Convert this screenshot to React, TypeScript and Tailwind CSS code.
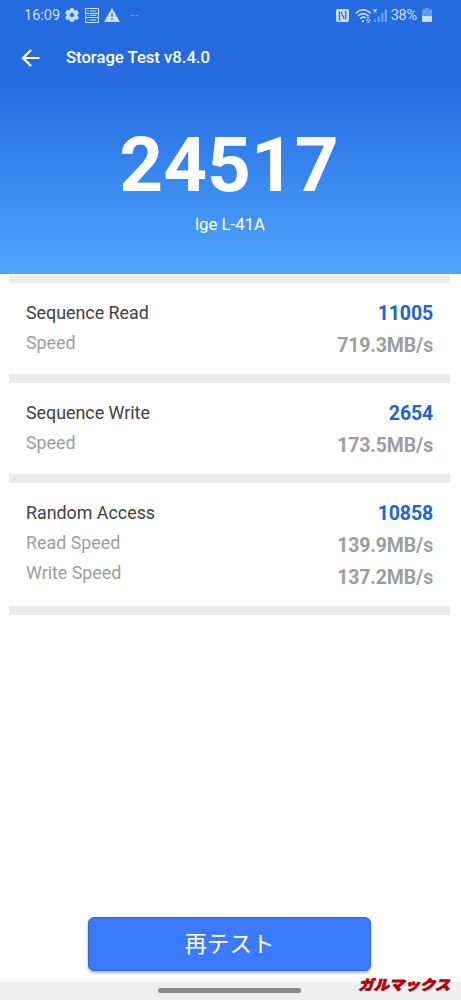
type Row = { label: string; value: string };

type Section = { title: string; score: string; rows: Row[] };

const sections: Section[] = [
  {
    title: "Sequence Read",
    score: "11005",
    rows: [{ label: "Speed", value: "719.3MB/s" }],
  },
  {
    title: "Sequence Write",
    score: "2654",
    rows: [{ label: "Speed", value: "173.5MB/s" }],
  },
  {
    title: "Random Access",
    score: "10858",
    rows: [
      { label: "Read Speed", value: "139.9MB/s" },
      { label: "Write Speed", value: "137.2MB/s" },
    ],
  },
];

const StatusBar = () => {
  return (
    <div className="flex h-[30px] items-center justify-between pl-6 pr-[29px] text-[#c9dffb]">
      <div className="flex items-center">
        <span className="w-[41px] pt-px text-[14.5px] leading-[30px]">16:09</span>
        <svg className="size-[14px]" viewBox="2 2 20 20" fill="currentColor">
          <path
            stroke="currentColor"
            d="M19.14 12.94c.04-.3.06-.61.06-.94s-.02-.64-.07-.94l2.03-1.58a.49.49 0 0 0 .12-.61l-1.92-3.32a.49.49 0 0 0-.59-.22l-2.39.96a7 7 0 0 0-1.62-.94l-.36-2.54a.48.48 0 0 0-.48-.41h-3.84a.48.48 0 0 0-.47.41l-.36 2.54c-.59.24-1.13.57-1.62.94l-2.39-.96a.49.49 0 0 0-.59.22L2.74 8.87a.48.48 0 0 0 .12.61l2.03 1.58c-.05.3-.09.63-.09.94s.02.64.07.94l-2.03 1.58a.49.49 0 0 0-.12.61l1.92 3.32c.12.22.37.29.59.22l2.39-.96c.5.38 1.03.7 1.62.94l.36 2.54c.05.24.24.41.48.41h3.84c.24 0 .44-.17.47-.41l.36-2.54c.59-.24 1.13-.56 1.62-.94l2.39.96c.22.08.47 0 .59-.22l1.92-3.32a.48.48 0 0 0-.12-.61zM12 15.6A3.6 3.6 0 1 1 12 8.4a3.6 3.6 0 0 1 0 7.2z"
          />
        </svg>
        <svg
          className="ml-[6px] h-[15px] w-[14px]"
          viewBox="0 0 14 15"
          fill="none"
          stroke="currentColor"
        >
          <path d="M.5.5h13v14H.5zM.5 5.5h13M.5 9.5h13M5 3h6.500M5 7.500h6.500M5 12h6.500M2.400 3h1.200M2.400 7.500h1.200M2.400 12h1.200" />
        </svg>
        <svg className="ml-[5px] h-[14px] w-4" viewBox="1 2 22 19" fill="currentColor">
          <path d="M1 21h22L12 2zm12-3h-2v-2h2zm0-4h-2V9h2z" />
        </svg>
        <span className="ml-[11px] flex gap-px opacity-60">
          <i className="h-px w-[1.5px] bg-current" />
          <i className="h-px w-[1.5px] bg-current" />
          <i className="h-px w-[1.5px] bg-current" />
        </span>
      </div>

      <div className="flex items-center">
        {/* NFC */}
        <svg className="h-[13px] w-[13px]" viewBox="0 0 13 13">
          <rect width="13" height="13" rx="2" fill="currentColor" />
          <path
            d="M3.4 2.600v7.800q0 .8.8.8M5 3l3.200 6.800M8.800 1.800q.9 0 .9.8v7.800"
            fill="none"
            stroke="#256be0"
            strokeWidth="1.300"
          />
        </svg>
        {/* Wi-Fi */}
        <svg
          className="ml-[6px] h-[15px] w-[17px]"
          viewBox="0 0 17 15"
          fill="none"
          stroke="currentColor"
          strokeWidth="1.600"
        >
          <path d="M.8 5.300Q8.200-1.800 15.800 5.300M3 8Q8.200 3.300 13.500 8M5.400 10.700Q8.200 8 10.600 10" />
          <circle cx="8" cy="13.200" r="1.100" fill="currentColor" stroke="none" />
          <path d="M12.200 9.500h2M11.200 12h1.500M13.800 12h1.500M12.500 14h2" strokeWidth="1.400" />
        </svg>
        {/* Mobile signal */}
        <svg className="ml-px h-[15px] w-[14px]" viewBox="0 0 14 15">
          <path d="M.6 1.500 3.600 4.500M3.600 1.500.6 4.500" stroke="currentColor" strokeWidth="1.400" />
          <path
            d="M1 11.500h2V14H1zM4.600 8.500h2.300V14H4.600zM8.200 5h2.300v9H8.200zM11.700 1.500H14V14h-2.300z"
            fill="currentColor"
            opacity=".45"
          />
        </svg>
        <span className="ml-[4px] pt-px text-[14.5px] leading-[30px] tracking-[-0.2px]">38%</span>
        <svg className="ml-[5px] h-[14px] w-[10px]" viewBox="0 0 10 14" fill="currentColor">
          <path d="M3 0h4v1.500h3V8H0V1.500h3z" opacity=".4" />
          <path d="M0 8h10v5q0 1-1 1H1q-1 0-1-1z" />
        </svg>
      </div>
    </div>
  );
};

const Watermark = () => {
  return (
    <svg className="absolute bottom-[7px] right-[6px] h-[18px] w-[98px]" viewBox="0 0 98 18">
      <text
        x="5"
        y="15"
        textLength="92"
        lengthAdjust="spacingAndGlyphs"
        transform="skewX(-14)"
        className="fill-[#ad0508] stroke-[#ad0508] font-['Noto_Sans_CJK_JP',sans-serif] text-[14px] font-black"
        strokeWidth=".8"
        strokeLinejoin="miter"
      >
        ガルマックス
      </text>
    </svg>
  );
};

const App = () => {
  return (
    <div className="relative flex h-[1000px] w-[461px] flex-col overflow-hidden bg-white font-[Roboto,'Noto_Sans_CJK_JP',sans-serif]">
      {/* Header */}
      <header className="h-[274px] shrink-0 bg-linear-to-b from-[#256be0] from-30% to-[#51a5fd] text-white">
        <StatusBar />
        <div className="flex h-[55px] items-center pl-[21px]">
          <svg
            className="h-[18px] w-[19px]"
            viewBox="0 0 19 18"
            fill="none"
            stroke="currentColor"
            strokeWidth="2.2"
          >
            <path d="M18.500 9H2M10 1 2 9l8 8" />
          </svg>
          <h1 className="ml-[26px] pt-px text-[16.65px] font-medium">Storage Test v8.4.0</h1>
        </div>
        <p className="mr-[3px] mt-[40px] text-center text-[76.5px] font-bold leading-[80px]">
          24517
        </p>
        <p className="mr-px mt-[7px] text-center text-[16.8px] leading-6">lge L-41A</p>
      </header>

      {/* Results */}
      <main className="mx-[9px] mr-[11px] mt-px border-t-8 border-[#ebebeb]">
        {sections.map((section) => (
          <section
            key={section.title}
            className="flex justify-between border-b-9 border-[#ebebeb] px-[17px] pb-[12px] pt-[15px]"
          >
            <div className="text-[17.85px] leading-[30px] text-[#9e9e9e]">
              <h2 className="text-[#424242]">{section.title}</h2>
              {section.rows.map((row) => (
                <p key={row.label}>{row.label}</p>
              ))}
            </div>
            <div className="text-right text-[19.5px] font-bold leading-[32px] tracking-[-0.15px] text-[#9e9e9e]">
              <p className="text-[#2064d6]">{section.score}</p>
              {section.rows.map((row) => (
                <p key={row.label}>{row.value}</p>
              ))}
            </div>
          </section>
        ))}
      </main>

      {/* Footer */}
      <div className="mt-auto mb-[11px] pl-[88px]">
        <button className="block h-[54px] w-[283px] rounded-md border border-[#3269cf] bg-[#3b7aff] pt-[2px] text-[22.5px] text-white shadow-[0_2px_3px_rgba(0,0,0,0.3)]">
          再テスト
        </button>
      </div>
      <div className="h-[18px] shrink-0 bg-[#efefef] pl-[158px] pt-[6px]">
        <div className="h-[5px] w-[143px] rounded-full bg-[#888]" />
      </div>
      <Watermark />
    </div>
  );
};

export default App;
